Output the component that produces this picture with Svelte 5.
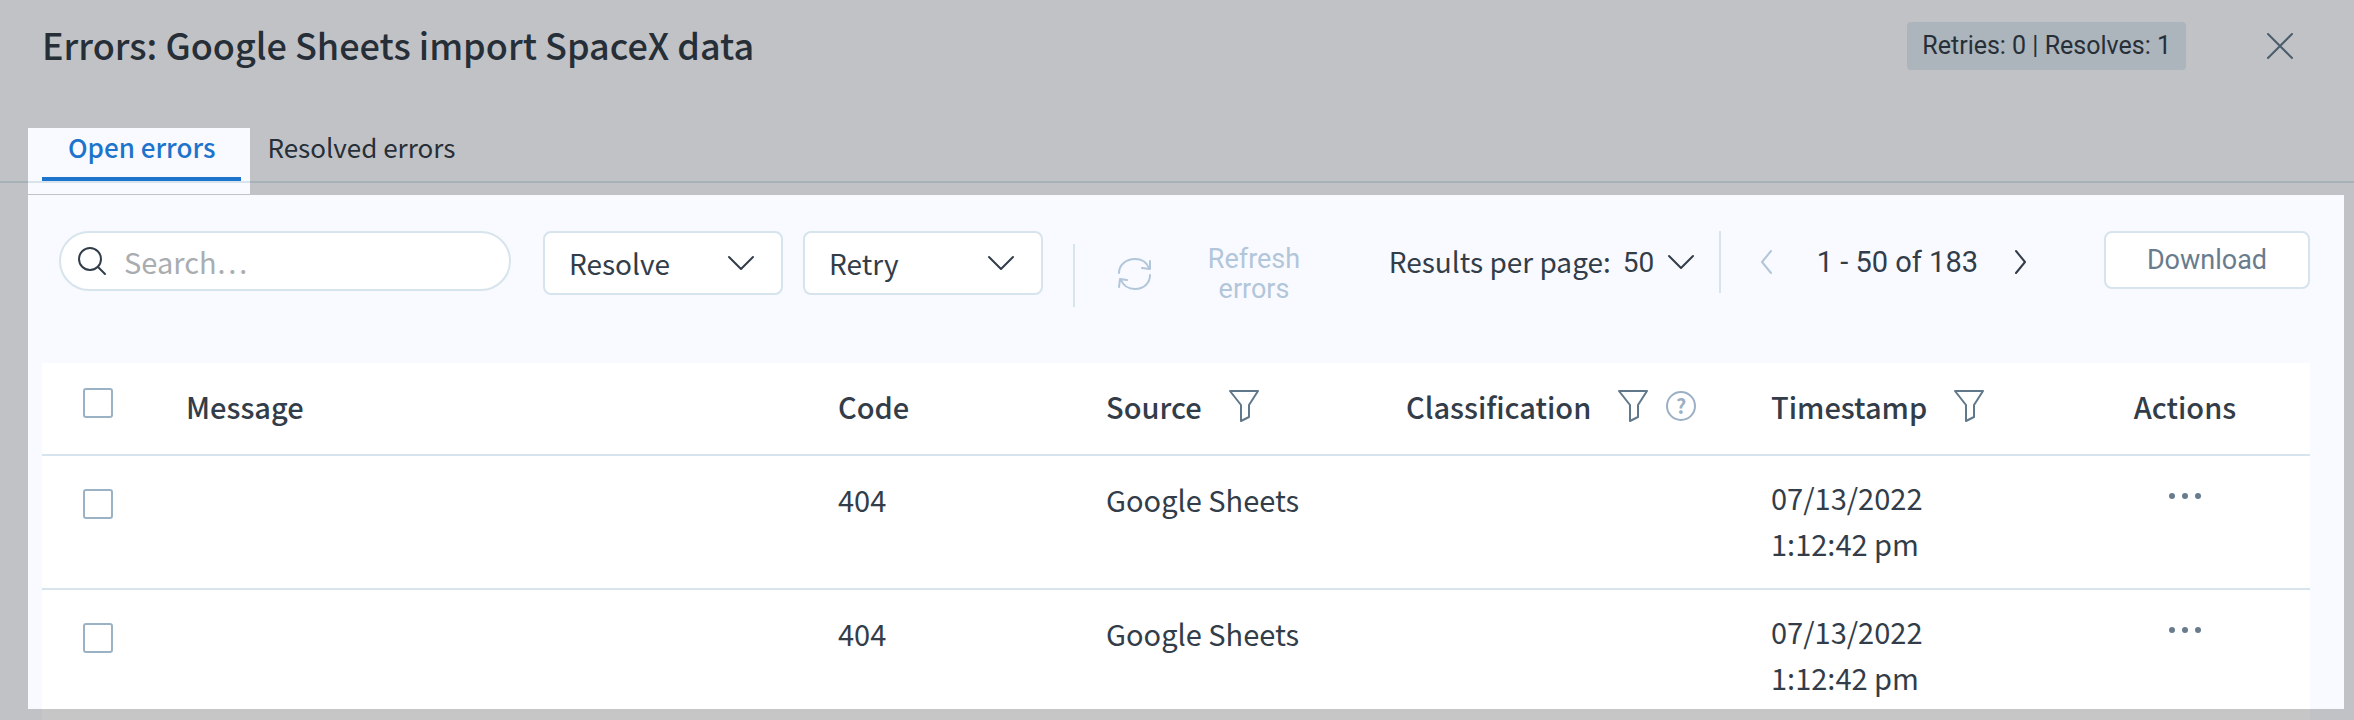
<script lang="ts">
  type ErrorRow = {
    id: number;
    message: string;
    code: string;
    source: string;
    classification: string;
    date: string;
    time: string;
  };

  const columns = [
    { id: "message", label: "Message", filter: false, help: false },
    { id: "code", label: "Code", filter: false, help: false },
    { id: "source", label: "Source", filter: true, help: false },
    { id: "classification", label: "Classification", filter: true, help: true },
    { id: "timestamp", label: "Timestamp", filter: true, help: false },
    { id: "actions", label: "Actions", filter: false, help: false },
  ];

  const rows: ErrorRow[] = [1, 2].map((id) => ({
    id,
    message: "",
    code: "404",
    source: "Google Sheets",
    classification: "",
    date: "07/13/2022",
    time: "1:12:42 pm",
  }));

  let activeTab = $state("open");
  let query = $state("");
  let selected = $state<number[]>([]);

  function toggleAll() {
    selected = selected.length === rows.length ? [] : rows.map((r) => r.id);
  }
</script>

{#snippet chevron()}
  <svg class="chevron" width="28" height="16" viewBox="0 0 28 16" aria-hidden="true">
    <path d="M2 2l12 12L26 2" />
  </svg>
{/snippet}

<div class="page">
  <header class="top">
    <h1>Errors: Google Sheets import SpaceX data</h1>
    <span class="badge">Retries: 0 | Resolves: 1</span>
    <button type="button" class="icon close" aria-label="Close">
      <svg width="28" height="28" viewBox="0 0 28 28"><path d="M2 2l24 24M26 2L2 26" /></svg>
    </button>
  </header>

  <nav class="tabs">
    <button type="button" class:active={activeTab === "open"} onclick={() => (activeTab = "open")}>
      Open errors
    </button>
    <button
      type="button"
      class:active={activeTab === "resolved"}
      onclick={() => (activeTab = "resolved")}
    >
      Resolved errors
    </button>
  </nav>

  <div class="toolbar">
    <label class="search">
      <svg width="30" height="30" viewBox="0 0 30 30" aria-hidden="true">
        <circle cx="13" cy="13" r="11" />
        <path d="M21 21l7 7" />
      </svg>
      <input type="text" placeholder="Search…" aria-label="Search" bind:value={query} />
    </label>

    <div class="bulk">
      <div class="dropdown">
        <select aria-label="Resolve"><option>Resolve</option></select>
        {@render chevron()}
      </div>
      <div class="dropdown">
        <select aria-label="Retry"><option>Retry</option></select>
        {@render chevron()}
      </div>
    </div>

    <button type="button" class="refresh" disabled>
      <svg width="34" height="34" viewBox="0 0 34 34" aria-hidden="true">
        <path d="M1 16C1 8 8 2 17 2c7 0 12 4 14 9M32 4v8l-8-1" />
        <path d="M32 18c0 8-6 14-15 14-7 0-12-4-14-9M1 30l1-8 7 1" />
      </svg>
      <span>Refresh errors</span>
    </button>

    <div class="paging">
      <div class="per-page">
        <label for="per-page">Results per page:</label>
        <select id="per-page"><option>50</option></select>
        {@render chevron()}
      </div>
      <div class="range">
        <button type="button" class="icon" aria-label="Previous page" disabled>
          <svg width="14" height="26" viewBox="0 0 14 26"><path d="M12 2L3 13l9 11" /></svg>
        </button>
        <span>1 - 50 of 183</span>
        <button type="button" class="icon" aria-label="Next page">
          <svg width="14" height="26" viewBox="0 0 14 26"><path d="M2 2l9 11-9 11" /></svg>
        </button>
      </div>
      <button type="button" class="download">Download</button>
    </div>
  </div>

  <div class="table-wrap">
    <table>
      <thead>
        <tr>
          <th class="check">
            <input
              type="checkbox"
              aria-label="Select all"
              checked={selected.length === rows.length}
              onchange={toggleAll}
            />
          </th>
          {#each columns as col (col.id)}
            <th class={col.id}>
              <div class="head">
                {col.label}
                {#if col.filter}
                  <button type="button" class="icon funnel" aria-label="Filter {col.label}">
                    <svg width="30" height="34" viewBox="0 0 30 34">
                      <path d="M1 2h28l-9 14v12l-8 4V16z" />
                    </svg>
                  </button>
                {/if}
                {#if col.help}
                  <button type="button" class="help">?</button>
                {/if}
              </div>
            </th>
          {/each}
        </tr>
      </thead>
      <tbody>
        {#each rows as row (row.id)}
          <tr>
            <td class="check">
              <input
                type="checkbox"
                aria-label="Select error {row.id}"
                value={row.id}
                bind:group={selected}
              />
            </td>
            <td>{row.message}</td>
            <td>{row.code}</td>
            <td>{row.source}</td>
            <td>{row.classification}</td>
            <td class="timestamp">
              <span>{row.date}</span>
              <span>{row.time}</span>
            </td>
            <td class="actions">
              <button type="button" class="icon more" aria-label="More actions">
                <svg width="34" height="8" viewBox="0 0 34 8">
                  <circle cx="4" cy="4" r="3" />
                  <circle cx="17" cy="4" r="3" />
                  <circle cx="30" cy="4" r="3" />
                </svg>
              </button>
            </td>
          </tr>
        {/each}
      </tbody>
    </table>
  </div>

  <!-- dims everything except the open tab and the error list -->
  <div class="shade"></div>
</div>

<style>
  .page {
    position: relative;
    height: 100vh;
    overflow: hidden;
    background: #f9faff;
    color: #323d49;
    font-family: "Noto Sans CJK SC", "Open Sans", sans-serif;
    font-size: 29px;
  }
  .page * {
    box-sizing: border-box;
  }

  button,
  input,
  select {
    margin: 0;
    padding: 0;
    border: 0;
    background: transparent;
    color: inherit;
    font: inherit;
  }
  svg {
    display: block;
    flex: none;
    fill: none;
    stroke: currentColor;
    stroke-width: 2;
    stroke-linecap: round;
    stroke-linejoin: round;
  }

  .top {
    display: flex;
    align-items: flex-start;
    height: 128px;
    padding: 22px 60px 0 42px;
  }
  h1 {
    flex: 1;
    margin: 0;
    font-size: 36px;
    font-weight: 500;
    line-height: 44px;
  }
  .badge {
    padding: 0 15px;
    border-radius: 4px;
    background: #dee8f2;
    font-family: Roboto, sans-serif;
    font-size: 25px;
    line-height: 48px;
  }
  .close {
    margin: 10px 0 0 80px;
    color: #61778a;
  }

  .tabs {
    display: flex;
    padding-left: 42px;
    border-bottom: 2px solid #d7e4ed;
  }
  .tabs button {
    padding: 0 26px 11px;
    border-bottom: 4px solid transparent;
    font-size: 26px;
    line-height: 38px;
  }
  .tabs button.active {
    border-color: #1c74cc;
    color: #1c74cc;
    font-weight: 500;
  }

  .toolbar {
    display: flex;
    align-items: flex-start;
    min-height: 180px;
    padding: 48px 44px 0 59px;
  }
  .search {
    display: flex;
    align-items: center;
    gap: 17px;
    width: 452px;
    height: 60px;
    padding: 0 16px;
    border: 2px solid #d7e4ed;
    border-radius: 30px;
    background: #fff;
  }
  .search input {
    flex: 1;
    min-width: 0;
    outline: 0;
    line-height: 40px;
  }
  .search input::placeholder {
    color: #a9adb0;
    opacity: 1;
  }

  .bulk {
    display: flex;
    gap: 20px;
    margin-left: 32px;
  }
  .dropdown {
    position: relative;
    width: 240px;
    height: 64px;
    border: 2px solid #d7e4ed;
    border-radius: 8px;
    background: #fff;
    font-size: 28px;
  }
  .dropdown select {
    width: 100%;
    height: 100%;
    padding-left: 24px;
    line-height: 44px;
  }
  .dropdown .chevron {
    position: absolute;
    top: 22px;
    right: 26px;
    pointer-events: none;
  }
  select {
    appearance: none;
  }

  .refresh {
    display: flex;
    align-items: center;
    gap: 42px;
    margin: 13px 0 0 30px;
    height: 63px;
    padding: 0 0 3px 43px;
    border-left: 2px solid #d7e4ed;
    color: #b2c6da;
    font-family: Roboto, sans-serif;
    font-size: 27px;
    line-height: 30px;
  }
  .refresh span {
    width: 120px;
    text-align: center;
  }

  .paging {
    display: flex;
    align-items: flex-start;
    margin-left: auto;
  }
  .per-page {
    display: flex;
    align-items: center;
    height: 62px;
    padding-right: 24px;
    border-right: 2px solid #d7e4ed;
    font-size: 28px;
  }
  .per-page label {
    line-height: 60px;
    padding-bottom: 2px;
  }
  .per-page select {
    width: 44px;
    margin-left: 12px;
    font-family: Roboto, sans-serif;
  }
  .range {
    display: flex;
    align-items: center;
    height: 62px;
    margin: 0 76px 0 38px;
    font-family: Roboto, sans-serif;
    font-size: 29px;
  }
  .range span {
    padding: 0 36px 0 44px;
  }
  .range button:disabled {
    color: #b2c6da;
  }
  .download {
    width: 206px;
    height: 58px;
    border: 2px solid #d7e4ed;
    border-radius: 8px;
    background: #fff;
    color: #687c8d;
    font-family: Roboto, sans-serif;
    font-size: 27px;
  }

  .table-wrap {
    margin: 0 44px 0 42px;
    background: #fff;
  }
  table {
    width: 100%;
    table-layout: fixed;
    border-collapse: separate;
    border-spacing: 0;
  }
  th,
  td {
    padding: 20px 0 0;
    border-bottom: 2px solid #d7e4ed;
    line-height: 46px;
    text-align: left;
    vertical-align: top;
  }
  th {
    height: 93px;
    font-weight: 500;
  }
  td {
    height: 134px;
  }
  th.check {
    width: 144px;
    padding: 25px 0 0 41px;
  }
  td.check {
    padding: 33px 0 0 41px;
  }
  th.code {
    width: 268px;
  }
  th.source {
    width: 300px;
  }
  th.classification {
    width: 365px;
  }
  th.timestamp {
    width: 289px;
  }
  th.actions {
    width: 250px;
  }
  .head {
    display: flex;
    align-items: center;
  }
  .actions .head {
    justify-content: center;
  }
  .funnel {
    margin-left: 27px;
    color: #61778a;
  }
  .help {
    width: 30px;
    height: 30px;
    margin-left: 18px;
    border: 2px solid #9bb0c5;
    border-radius: 50%;
    color: #9bb0c5;
    font-size: 20px;
    font-weight: 700;
    line-height: 26px;
  }
  input[type="checkbox"] {
    display: block;
    appearance: none;
    width: 30px;
    height: 30px;
    border: 2px solid #9bb2c5;
    border-radius: 3px;
    background: #fff;
  }
  input[type="checkbox"]:checked {
    background: #1c74cc;
  }
  td.timestamp {
    padding-top: 18px;
  }
  td.timestamp span {
    display: block;
  }
  td.actions {
    padding-top: 36px;
  }
  .more {
    display: block;
    margin: 0 auto;
    color: #687c8d;
  }
  .more svg {
    fill: currentColor;
    stroke: none;
  }

  .shade {
    position: absolute;
    inset: 0;
    background: rgba(0, 0, 0, 0.225);
    pointer-events: none;
    clip-path: polygon(
      evenodd,
      0 0, 100% 0, 100% 100%, 0 100%, 0 0,
      28px 128px, 250px 128px, 250px 194px, 28px 194px, 28px 128px,
      0 0,
      28px 195px, calc(100% - 10px) 195px, calc(100% - 10px) calc(100% - 11px), 28px calc(100% - 11px), 28px 195px,
      0 0
    );
  }
</style>
